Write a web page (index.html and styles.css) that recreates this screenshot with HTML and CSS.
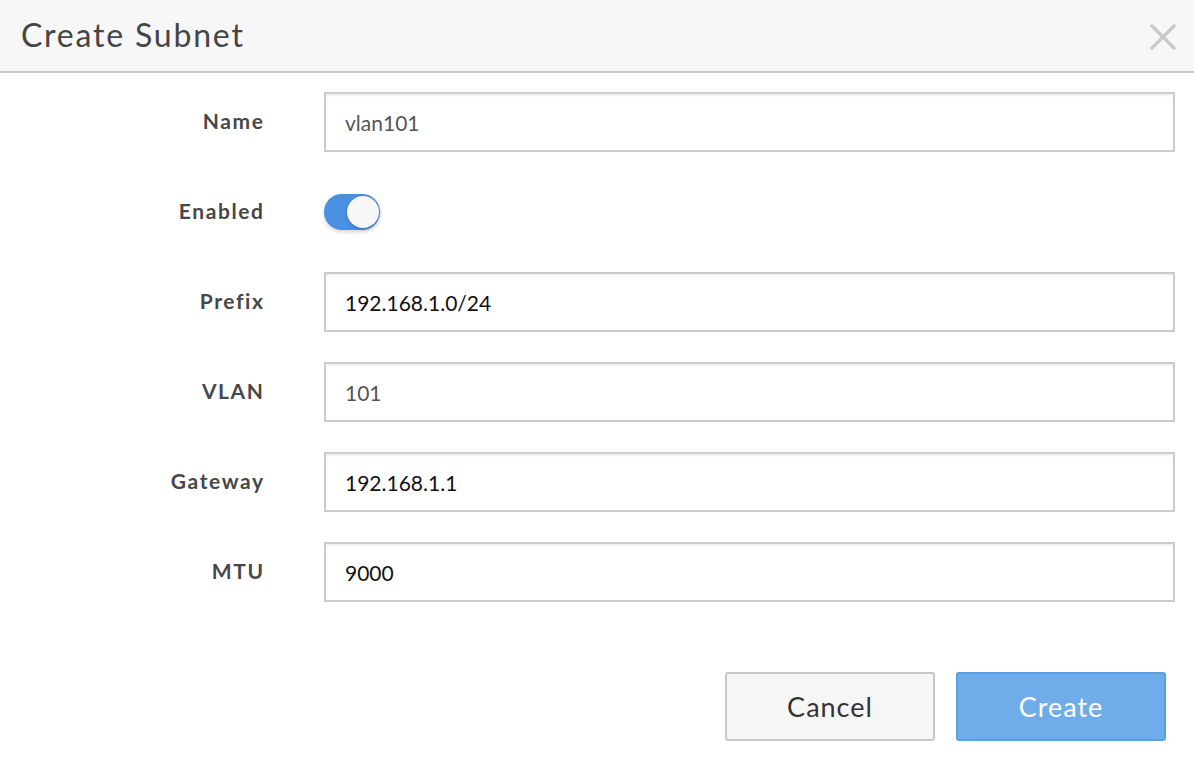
FILE: index.html
```html
<!DOCTYPE html>
<html>
<head>
<meta charset="utf-8">
<link rel="stylesheet" href="styles.css">
</head>
<body>
<div class="modal">
  <div class="modal-header">
    <h1 class="title">Create Subnet</h1>
    <button class="close" aria-label="Close">
      <svg width="26" height="26" viewBox="0 0 26 26"><path d="M2 2 L24 24 M24 2 L2 24" stroke="#c8c8c8" stroke-width="3.2" stroke-linecap="square" fill="none"/></svg>
    </button>
  </div>
  <form class="form">
    <div class="row">
      <label class="label">Name</label>
      <input class="input" type="text" placeholder="vlan101">
    </div>
    <div class="row">
      <label class="label">Enabled</label>
      <div class="toggle"><span class="knob"></span></div>
    </div>
    <div class="row">
      <label class="label">Prefix</label>
      <input class="input" type="text" value="192.168.1.0/24">
    </div>
    <div class="row">
      <label class="label">VLAN</label>
      <input class="input" type="text" placeholder="101">
    </div>
    <div class="row">
      <label class="label">Gateway</label>
      <input class="input" type="text" value="192.168.1.1">
    </div>
    <div class="row">
      <label class="label">MTU</label>
      <input class="input" type="text" value="9000">
    </div>
  </form>
  <div class="actions">
    <button class="btn btn-cancel">Cancel</button>
    <button class="btn btn-create">Create</button>
  </div>
</div>
</body>
</html>
```
FILE: styles.css
```css
* { box-sizing: border-box; }
html, body { margin: 0; padding: 0; background: #fff; }
body { font-family: Lato, "Open Sans", sans-serif; color: #444; }
.modal { width: 1194px; height: 770px; }
.modal-header {
  height: 73px;
  background: #f7f7f7;
  border-bottom: 2px solid #c9c9c9;
  display: flex;
  align-items: center;
  justify-content: space-between;
  padding: 0 18px 0 21px;
}
.title {
  margin: 0;
  font-weight: 400;
  font-size: 32px;
  color: #454545;
  letter-spacing: 1.8px;
  margin-top: -2px;
}
.close {
  border: 0;
  background: none;
  padding: 0;
  width: 26px;
  height: 26px;
  display: flex;
  margin-top: 2px;
}
.form {
  display: flex;
  flex-direction: column;
  gap: 30px;
  padding: 19px 19px 0 0;
}
.row {
  display: grid;
  grid-template-columns: 263px 1fr;
  column-gap: 61px;
  align-items: center;
  height: 60px;
}
.label {
  text-align: right;
  font-weight: 700;
  font-size: 21px;
  color: #474747;
  letter-spacing: 1.6px;
  margin-right: -1.6px;
  margin-top: -3px;
}
.input {
  height: 60px;
  width: 100%;
  border: 2px solid #cbcbcb;
  border-radius: 0;
  box-shadow: inset 0 2px 2px rgba(0,0,0,0.06);
  padding: 0 19px;
  font-family: Lato, "Open Sans", sans-serif;
  font-size: 21px;
  color: #111;
  background: #fff;
  outline: none;
}
.input::placeholder { color: #555; opacity: 1; }
.toggle {
  width: 56px;
  height: 36px;
  border-radius: 18px;
  background: #4a90e2;
  position: relative;
  box-shadow: 0 2px 4px rgba(0,0,0,0.18);
}
.knob {
  position: absolute;
  right: 1px;
  top: 2px;
  width: 32px;
  height: 32px;
  border-radius: 50%;
  background: #f7f7f7;
  box-shadow: 0 1px 3px rgba(0,0,0,0.3);
}
.actions {
  display: flex;
  justify-content: flex-end;
  gap: 21px;
  padding: 70px 28px 0 0;
}
.btn {
  width: 210px;
  height: 69px;
  border-radius: 3px;
  font-family: Lato, "Open Sans", sans-serif;
  font-size: 27px;
  letter-spacing: 1px;
  cursor: pointer;
}
.btn-cancel {
  background: #f6f6f6;
  border: 2px solid #c8c8c8;
  color: #333;
}
.btn-create {
  background: #6eade9;
  border: 2px solid #5b9fe1;
  color: #fff;
}
```
